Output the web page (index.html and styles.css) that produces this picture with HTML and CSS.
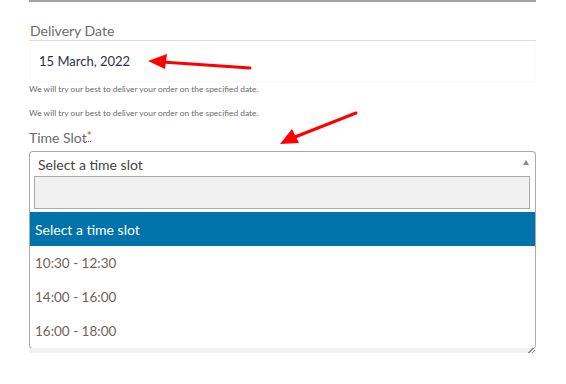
FILE: index.html
```html
<!DOCTYPE html>
<html>
<head>
<meta charset="utf-8">
<link rel="stylesheet" href="styles.css">
</head>
<body>
<div class="page">
  <div class="prev"></div>
  <div class="field-title">Delivery Date</div>
  <div class="date-box">15 March, 2022</div>
  <p class="help first">We will try our best to deliver your order on the specified date.</p>
  <p class="help">We will try our best to deliver your order on the specified date.</p>
  <div class="label">Time Slot<abbr class="req" title="required">*</abbr></div>
  <div class="select-wrap">
    <div class="select">
      <span>Select a time slot</span>
      <span class="caret"></span>
    </div>
    <div class="dropdown">
      <div class="search"><div class="search-input"></div></div>
      <ul class="options">
        <li class="opt active">Select a time slot</li>
        <li class="opt">10:30 - 12:30</li>
        <li class="opt">14:00 - 16:00</li>
        <li class="opt">16:00 - 18:00</li>
      </ul>
    </div>
    <div class="under"><span class="grip"></span></div>
  </div>
  <svg class="arrows" width="566" height="384" viewBox="0 0 566 384">
    <line x1="250" y1="68" x2="162" y2="62" stroke="#ff0000" stroke-width="3" stroke-linecap="round"/>
    <polygon points="148,61 167,54 165,69" fill="#ff0000"/>
    <line x1="356" y1="113" x2="295" y2="137" stroke="#ff0000" stroke-width="3" stroke-linecap="round"/>
    <polygon points="280,144 292,129 299,143" fill="#ff0000"/>
  </svg>
</div>
</body>
</html>
```
FILE: styles.css
```css
* { box-sizing: border-box; }
html, body { margin: 0; padding: 0; background: #fff; }
body { font-family: Lato, "Open Sans", sans-serif; color: #555; }
.page { position: relative; width: 566px; height: 384px; padding-left: 29px; overflow: hidden; }
.prev { width: 507px; height: 2px; background: #a3a3a3; }
.field-title {
  width: 507px;
  margin-top: 19px;
  padding-left: 1px;
  font-size: 14px;
  line-height: 19px;
  color: #6a6a6a;
  border-bottom: 1px solid #dcdcdc;
}
.date-box {
  width: 507px;
  height: 41px;
  padding-left: 9px;
  display: flex;
  align-items: center;
  font-size: 13px;
  color: #2e3042;
  border: 1px solid #fafafa;
  border-top: none;
}
.help {
  margin: 0;
  font-size: 8.4px;
  line-height: 12px;
  color: #6b6b6b;
}
.help.first { margin-top: 1px; }
.help + .help { margin-top: 12px; }
.label {
  margin-top: 10px;
  font-size: 14px;
  line-height: 18px;
  color: #6a6a6a;
}
.req { color: #e2401c; text-decoration: underline dotted; font-size: 12px; vertical-align: top; line-height: 14px; }
.select-wrap { width: 507px; margin-top: 4px; }
.select {
  height: 25px;
  border: 1px solid #aaa;
  border-bottom: none;
  border-radius: 4px 4px 0 0;
  padding-left: 8px;
  padding-right: 6px;
  display: flex;
  align-items: center;
  justify-content: space-between;
  font-size: 14px;
  color: #444;
}
.caret {
  width: 0; height: 0;
  border-left: 3.5px solid transparent;
  border-right: 3.5px solid transparent;
  border-bottom: 5px solid #888;
  margin-top: -3px;
}
.dropdown {
  border: 1px solid #aaa;
  border-top: none;
  border-radius: 0 0 4px 4px;
  background: #fff;
}
.search { padding: 0 5px 3px 4px; }
.search-input { height: 33px; background: #f1f1f1; border: 1px solid #aaa; }
.options { list-style: none; margin: 0; padding: 0; }
.opt {
  height: 34px;
  padding-left: 5px;
  display: flex;
  align-items: center;
  font-size: 13.5px;
  color: #6e6259;
}
.opt.active { background: #0073aa; color: #fff; font-size: 14px; }
.under { position: relative; height: 5px; margin-top: -1px; background: #f1f1f1; }
.grip {
  position: absolute; right: 1px; bottom: 0;
  width: 8px; height: 5px;
  background: linear-gradient(135deg, transparent 45%, #888 45%, #888 55%, transparent 55%, transparent 70%, #888 70%, #888 80%, transparent 80%);
}
.arrows { position: absolute; left: 0; top: 0; pointer-events: none; }
```
